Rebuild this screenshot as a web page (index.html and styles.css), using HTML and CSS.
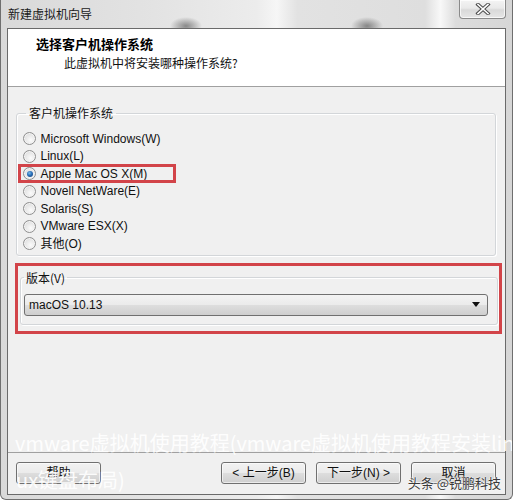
FILE: index.html
```html
<!DOCTYPE html>
<html lang="zh-CN">
<head>
<meta charset="utf-8">
<title>新建虚拟机向导</title>
<link rel="stylesheet" href="styles.css">
</head>
<body>
<div class="window">
  <div class="titlebar">
    <span class="title">新建虚拟机向导</span>
    <button class="close" aria-label="关闭">
      <svg width="16" height="12" viewBox="0 0 16 12">
        <path d="M3 1.5 L13 10.5 M13 1.5 L3 10.5" stroke="#4b4b4b" stroke-width="3.6" stroke-linecap="square" fill="none"/>
        <path d="M3 1.5 L13 10.5 M13 1.5 L3 10.5" stroke="#ffffff" stroke-width="1.6" stroke-linecap="square" fill="none"/>
      </svg>
    </button>
  </div>
  <div class="client">
    <div class="header">
      <div class="h-title">选择客户机操作系统</div>
      <div class="h-sub">此虚拟机中将安装哪种操作系统?</div>
    </div>
    <div class="body">
      <fieldset class="group os-group">
        <legend>客户机操作系统</legend>
        <ul class="radios">
          <li class="radio"><span class="dot"></span>Microsoft Windows(W)</li>
          <li class="radio"><span class="dot"></span>Linux(L)</li>
          <li class="radio checked"><span class="dot"></span>Apple Mac OS X(M)<span class="mark mark-os"></span></li>
          <li class="radio"><span class="dot"></span>Novell NetWare(E)</li>
          <li class="radio"><span class="dot"></span>Solaris(S)</li>
          <li class="radio"><span class="dot"></span>VMware ESX(X)</li>
          <li class="radio"><span class="dot"></span>其他(O)</li>
        </ul>
      </fieldset>
      <div class="mark-box">
        <fieldset class="group ver-group">
          <legend>版本(V)</legend>
          <div class="select">
            <span>macOS 10.13</span>
            <svg class="arrow" width="8" height="5" viewBox="0 0 8 5"><path d="M0 0 H8 L4 5 Z" fill="#111"/></svg>
          </div>
        </fieldset>
      </div>
    </div>
    <div class="footer">
      <button class="btn">帮助</button>
      <span class="spacer"></span>
      <button class="btn">&lt; 上一步(B)</button>
      <button class="btn gap">下一步(N) &gt;</button>
      <button class="btn gap">取消</button>
    </div>
  </div>
  <div class="watermark">
    <div>vmware虚拟机使用教程(vmware虚拟机使用教程安装linux键盘布局)</div>
    <div class="wm2">ux键盘布局)</div>
  </div>
  <div class="credit">头条 @锐鹏科技</div>
</div>
</body>
</html>
```

FILE: styles.css
```css
* { box-sizing: border-box; }
html, body { margin: 0; padding: 0; }
body {
  font-family: "Liberation Sans", "Noto Sans CJK SC", sans-serif;
  font-size: 12px;
  color: #000;
  background: #fff;
}
.window {
  position: relative;
  width: 513px;
  height: 500px;
  overflow: hidden;
  display: flex;
  flex-direction: column;
  padding: 0 6px 4px 6px;
  border: 1px solid #6f6f6f;
  border-top: none;
  border-radius: 0 0 6px 6px;
  background:
    radial-gradient(ellipse 16px 9px at 185px 26px, rgba(60,60,60,0.55), rgba(60,60,60,0) 100%),
    radial-gradient(ellipse 16px 9px at 366px 26px, rgba(60,60,60,0.55), rgba(60,60,60,0) 100%),
    linear-gradient(to right, #d9d9d9 0, #e3e3e3 30%, #ececec 50%, #f6f6f6 54%, #e2e2e2 58%, #dedede 83%, #f8f8f8 86%, #dcdcdc 89%, #d6d6d6 100%);
}
.titlebar {
  height: 28px;
  display: flex;
  align-items: center;
  justify-content: space-between;
  padding-left: 1px;
}
.title {
  font-family: "Noto Sans CJK SC", sans-serif;
  font-size: 12px;
  line-height: 16px;
  color: #1a1a1a;
}
.close {
  align-self: flex-start;
  width: 47px;
  height: 19px;
  margin: 0;
  padding: 0;
  display: flex;
  align-items: center;
  justify-content: center;
  border: 1px solid #8a8a8a;
  border-top: none;
  border-radius: 0 0 4px 4px;
  background: linear-gradient(to bottom, #f4f4f4 0%, #e9e9e9 45%, #d9d9d9 55%, #e6e6e6 100%);
  box-shadow: inset 0 0 0 1px rgba(255,255,255,0.7);
}
.client {
  flex: 1;
  display: flex;
  flex-direction: column;
  border: 1px solid #6a6a6a;
  background: #f0f0f0;
}
.header {
  height: 58px;
  background: #fff;
  border-bottom: 1px solid #a0a0a0;
  padding: 6px 0 0 28px;
  font-family: "Noto Sans CJK SC", sans-serif;
}
.h-title {
  font-size: 13px;
  font-weight: bold;
  line-height: 18px;
}
.h-sub {
  margin-top: 2px;
  padding-left: 28px;
  font-size: 12px;
  line-height: 16px;
  color: #111;
}
.body {
  flex: 1;
  display: flex;
  flex-direction: column;
}
.group {
  border: 1px solid #d3d6d9;
  border-radius: 3px;
  box-shadow: inset 1px 1px 0 #fff, 1px 1px 0 #fff;
  min-width: 0;
}
.group legend {
  font-family: "Noto Sans CJK SC", sans-serif;
  font-size: 12px;
  line-height: 16px;
  color: #111;
}
.os-group {
  margin: 18px 9px 0 8px;
  padding: 9px 0 2px 6px;
}
.os-group legend {
  margin-left: 3px;
  padding: 0 3px;
}
.radios {
  list-style: none;
  margin: 0;
  padding: 0;
}
.radio {
  position: relative;
  height: 17.5px;
  display: flex;
  align-items: center;
  line-height: 16px;
  color: #111;
}
.dot {
  position: relative;
  width: 13px;
  height: 13px;
  margin-right: 4.5px;
  border-radius: 50%;
  border: 1px solid #8f8f8f;
  background: radial-gradient(circle at 60% 65%, #fbfbfb 0%, #e6e6e6 55%, #cfcfcf 100%);
  box-shadow: inset 0 0 0 1px #f4f4f4;
  flex: none;
}
.checked .dot::after {
  content: "";
  position: absolute;
  left: 2.5px;
  top: 2.5px;
  width: 6px;
  height: 6px;
  border-radius: 50%;
  background: radial-gradient(circle at 40% 35%, #7cbbe8 0%, #2a6fb8 45%, #173a6e 100%);
}
.mark {
  position: absolute;
  border: 3px solid #d24449;
  pointer-events: none;
}
.mark-os {
  left: -5px;
  top: -1px;
  width: 158px;
  height: 19px;
}
.mark-box {
  margin: 7px 3px 0 7px;
  border: 3px solid #d24449;
}
.ver-group {
  margin: 4px 1px 6px 2px;
  padding: 8px 9px 8px 3px;
}
.ver-group legend {
  margin-left: 0;
  padding: 0 2px;
}
.select {
  height: 22px;
  display: flex;
  align-items: center;
  justify-content: space-between;
  padding: 0 4px 0 4px;
  border: 1px solid #707070;
  border-radius: 3px;
  background: linear-gradient(to bottom, #f3f3f3 0%, #ebebeb 48%, #dddddd 52%, #cfcfcf 100%);
  color: #111;
}
.arrow { margin-right: 3px; }
.footer {
  height: 42px;
  border-top: 1px solid #a0a0a0;
  display: flex;
  align-items: flex-start;
  padding: 9px 9px 0 8px;
}
.spacer { flex: 1; }
.btn {
  width: 85px;
  height: 22px;
  margin: 0;
  padding: 0;
  border: 1px solid #707070;
  border-radius: 3px;
  background: linear-gradient(to bottom, #f2f2f2 0%, #ebebeb 48%, #dddddd 52%, #cfcfcf 100%);
  box-shadow: inset 0 0 0 1px rgba(255,255,255,0.6);
  font-family: "Liberation Sans", "Noto Sans CJK SC", sans-serif;
  font-size: 12px;
  line-height: 18px;
  color: #111;
}
.btn.gap { margin-left: 10px; }
.watermark {
  position: absolute;
  left: 14px;
  top: 424px;
  font-family: "Noto Sans CJK SC", sans-serif;
  font-size: 20px;
  line-height: 37px;
  color: rgba(255,255,255,0.93);
  white-space: nowrap;
  pointer-events: none;
}
.wm2 { margin-left: 1px; }
.credit {
  position: absolute;
  right: 11px;
  top: 474px;
  font-family: "Noto Sans CJK SC", sans-serif;
  font-size: 13px;
  line-height: 18px;
  color: #3a3a3a;
  text-shadow: 0 0 2px #fff, 0 0 1px #fff, 0 0 1px #fff;
  white-space: nowrap;
}
```
